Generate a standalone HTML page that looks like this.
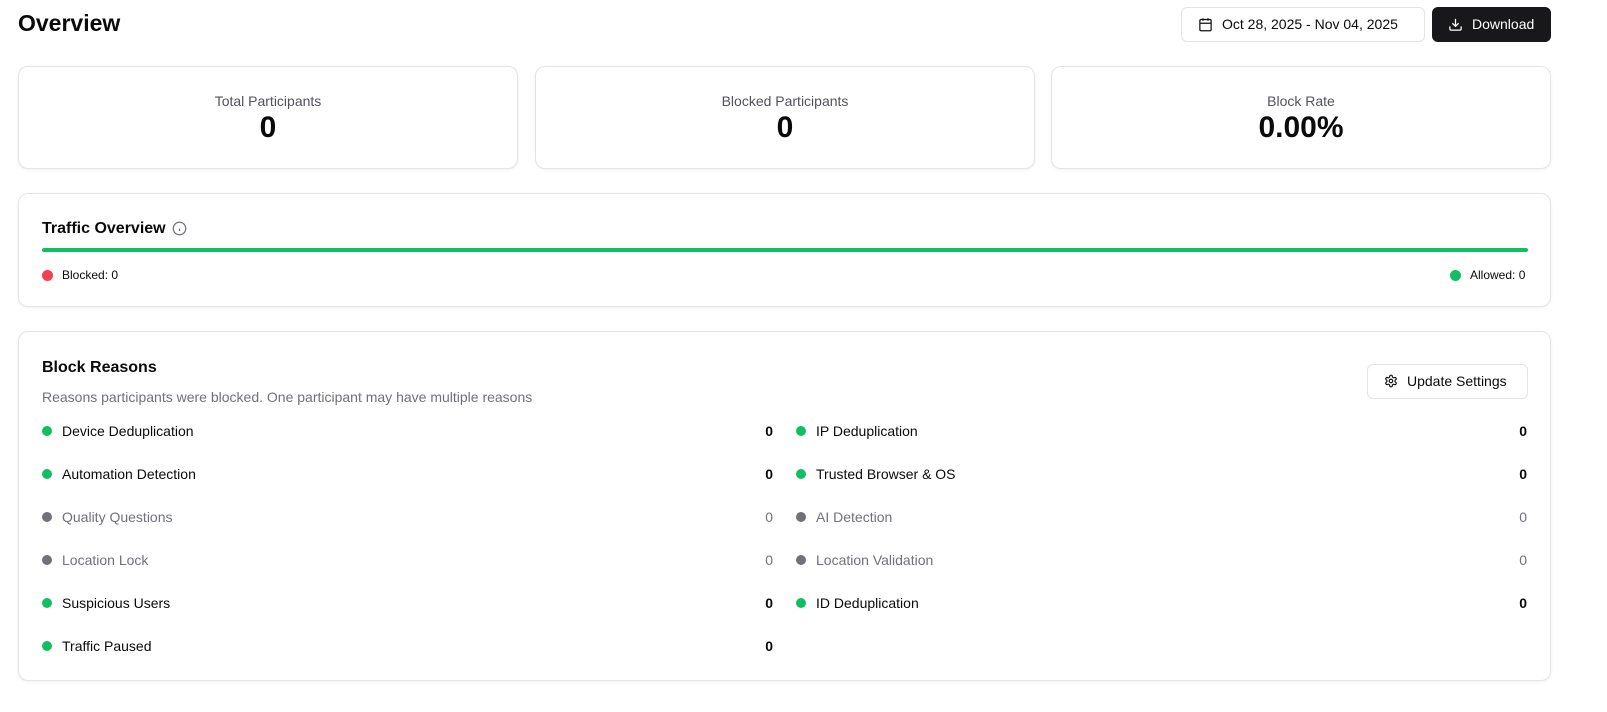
<!DOCTYPE html>
<html><head><style>
*{box-sizing:border-box;margin:0;padding:0}
body{width:1607px;height:712px;background:#fff;font-family:"Liberation Sans",Arial,sans-serif;color:#0a0a0a;position:relative;overflow:hidden}
.a{position:absolute}
.card{position:absolute;border:1px solid #e4e4e7;border-radius:10px;background:#fff;box-shadow:0 1px 3px rgba(0,0,0,.06)}
.stat{text-align:center}
.stat .l{position:absolute;top:26px;width:100%;font-size:14px;color:#52525b}
.stat .v{position:absolute;top:44px;width:100%;font-size:30px;font-weight:bold}
.row{position:absolute;height:20px;font-size:14px;line-height:20px}
.row .d{position:absolute;left:0;top:5px;width:10px;height:10px;border-radius:50%;background:#10c060}
.row .t{position:absolute;left:20px}
.row .n{position:absolute;right:0;font-weight:bold}
.row.g .d{background:#71717a}.row.g{color:#71717a}.row.g .n{font-weight:normal}
</style></head><body>
<div class="a" style="left:18px;top:10px;font-size:23px;font-weight:bold">Overview</div>
<div class="a" style="left:1181px;top:7px;width:244px;height:35px;border:1px solid #e4e4e7;border-radius:6px;font-size:14px;line-height:33px;padding-left:40px">Oct 28, 2025 - Nov 04, 2025
<svg class="a" style="left:16px;top:9px" width="15" height="15" viewBox="0 0 24 24" fill="none" stroke="#111" stroke-width="2"><rect x="3" y="4" width="18" height="18" rx="2"/><path d="M16 2v4M8 2v4M3 10h18"/></svg></div>
<div class="a" style="left:1432px;top:7px;width:119px;height:35px;background:#18181b;border-radius:6px;color:#fff;font-size:14px;line-height:35px;padding-left:40px">Download
<svg class="a" style="left:16px;top:10px" width="15" height="15" viewBox="0 0 24 24" fill="none" stroke="#fff" stroke-width="2"><path d="M21 15v4a2 2 0 0 1-2 2H5a2 2 0 0 1-2-2v-4M7 10l5 5 5-5M12 15V3"/></svg></div>

<div class="card stat" style="left:18px;top:66px;width:500px;height:103px"><div class="l">Total Participants</div><div class="v">0</div></div>
<div class="card stat" style="left:535px;top:66px;width:500px;height:103px"><div class="l">Blocked Participants</div><div class="v">0</div></div>
<div class="card stat" style="left:1051px;top:66px;width:500px;height:103px"><div class="l">Block Rate</div><div class="v">0.00%</div></div>

<div class="card" style="left:18px;top:193px;width:1533px;height:114px">
<div class="a" style="left:23px;top:26px;font-size:16px;font-weight:bold">Traffic Overview</div>
<svg class="a" style="left:153px;top:27px" width="15" height="15" viewBox="0 0 24 24" fill="none" stroke="#71717a" stroke-width="2"><circle cx="12" cy="12" r="10"/><path d="M12 16v-4M12 8h.01"/></svg>
<div class="a" style="left:23px;top:54px;width:1486px;height:4px;background:#10c060;border-radius:2px"></div>
<div class="row" style="left:23px;top:71px;width:200px;font-size:12px"><div class="d" style="background:#f43f4e;width:11px;height:11px"></div><div class="t">Blocked: 0</div></div>
<div class="row" style="left:1431px;top:71px;width:100px;font-size:12px"><div class="d" style="width:11px;height:11px"></div><div class="t">Allowed: 0</div></div>
</div>

<div class="card" style="left:18px;top:331px;width:1533px;height:350px">
<div class="a" style="left:23px;top:27px;font-size:16px;font-weight:bold">Block Reasons</div>
<div class="a" style="left:23px;top:57px;font-size:14px;color:#71717a">Reasons participants were blocked. One participant may have multiple reasons</div>
<div class="a" style="left:1348px;top:32px;width:161px;height:35px;border:1px solid #e4e4e7;border-radius:6px;font-size:14px;line-height:33px;padding-left:39px">Update Settings
<svg class="a" style="left:16px;top:9px" width="14" height="14" viewBox="0 0 24 24" fill="none" stroke="#111" stroke-width="2"><circle cx="12" cy="12" r="3"/><path d="M12.2 2h-.4a2 2 0 0 0-2 2v.2a2 2 0 0 1-1 1.7l-.4.3a2 2 0 0 1-2 0l-.2-.1a2 2 0 0 0-2.7.7l-.2.4a2 2 0 0 0 .7 2.7l.2.1a2 2 0 0 1 1 1.7v.5a2 2 0 0 1-1 1.7l-.2.1a2 2 0 0 0-.7 2.7l.2.4a2 2 0 0 0 2.7.7l.2-.1a2 2 0 0 1 2 0l.4.3a2 2 0 0 1 1 1.7V20a2 2 0 0 0 2 2h.4a2 2 0 0 0 2-2v-.2a2 2 0 0 1 1-1.7l.4-.3a2 2 0 0 1 2 0l.2.1a2 2 0 0 0 2.7-.7l.2-.4a2 2 0 0 0-.7-2.7l-.2-.1a2 2 0 0 1-1-1.7v-.5a2 2 0 0 1 1-1.7l.2-.1a2 2 0 0 0 .7-2.7l-.2-.4a2 2 0 0 0-2.7-.7l-.2.1a2 2 0 0 1-2 0l-.4-.3a2 2 0 0 1-1-1.7V4a2 2 0 0 0-2-2z"/></svg></div>
</div>

<div class="row" style="left:42px;top:421px;width:731px"><div class="d"></div><div class="t">Device Deduplication</div><div class="n">0</div></div>
<div class="row" style="left:796px;top:421px;width:731px"><div class="d"></div><div class="t">IP Deduplication</div><div class="n">0</div></div>
<div class="row" style="left:42px;top:464px;width:731px"><div class="d"></div><div class="t">Automation Detection</div><div class="n">0</div></div>
<div class="row" style="left:796px;top:464px;width:731px"><div class="d"></div><div class="t">Trusted Browser &amp; OS</div><div class="n">0</div></div>
<div class="row g" style="left:42px;top:507px;width:731px"><div class="d"></div><div class="t">Quality Questions</div><div class="n">0</div></div>
<div class="row g" style="left:796px;top:507px;width:731px"><div class="d"></div><div class="t">AI Detection</div><div class="n">0</div></div>
<div class="row g" style="left:42px;top:550px;width:731px"><div class="d"></div><div class="t">Location Lock</div><div class="n">0</div></div>
<div class="row g" style="left:796px;top:550px;width:731px"><div class="d"></div><div class="t">Location Validation</div><div class="n">0</div></div>
<div class="row" style="left:42px;top:593px;width:731px"><div class="d"></div><div class="t">Suspicious Users</div><div class="n">0</div></div>
<div class="row" style="left:796px;top:593px;width:731px"><div class="d"></div><div class="t">ID Deduplication</div><div class="n">0</div></div>
<div class="row" style="left:42px;top:636px;width:731px"><div class="d"></div><div class="t">Traffic Paused</div><div class="n">0</div></div>
</body></html>
